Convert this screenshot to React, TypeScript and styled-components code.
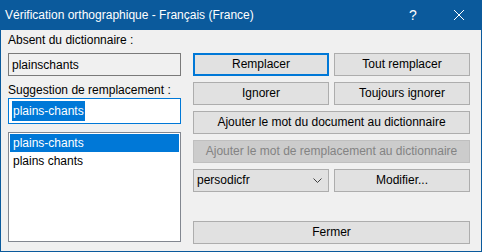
import React from 'react';
import styled, { createGlobalStyle } from 'styled-components';

const GlobalStyle = createGlobalStyle`
  html, body {
    margin: 0;
    padding: 0;
    background: #ffffff;
  }
  body {
    font-family: "Liberation Sans", "Noto Sans", sans-serif;
    font-size: 12px;
  }
`;

const Window = styled.div`
  width: 482px;
  height: 252px;
  box-sizing: border-box;
  border: 1px solid #0b5a9c;
  border-top: none;
  background: #f0f0f0;
  display: flex;
  flex-direction: column;
`;

const TitleBar = styled.div`
  height: 30px;
  margin: 0 -1px;
  background: #0b5a9c;
  color: #ffffff;
  display: flex;
  align-items: center;
  padding-left: 5px;
  font-size: 12px;
`;

const Title = styled.div`
  flex: 1;
  padding-bottom: 1px;
`;

const CaptionButton = styled.div`
  width: 46px;
  height: 30px;
  display: flex;
  align-items: center;
  justify-content: center;
  font-size: 14px;
`;

const Body = styled.div`
  flex: 1;
  display: flex;
  padding: 0 11px 7px 7px;
  gap: 12px;
`;

const LeftColumn = styled.div`
  width: 174px;
  display: flex;
  flex-direction: column;
`;

type LabelProps = { top: number; bottom: number };

const Label = styled.div<LabelProps>`
  height: 14px;
  line-height: 14px;
  color: #000000;
  margin-top: ${p => p.top}px;
  margin-bottom: ${p => p.bottom}px;
`;

type FieldProps = { focused?: boolean; readOnly?: boolean; tall?: boolean };

const Field = styled.div<FieldProps>`
  height: ${p => (p.tall ? 26 : 23)}px;
  box-sizing: border-box;
  border: 1px solid ${p => (p.focused ? '#0078d7' : '#7a7a7a')};
  background: ${p => (p.readOnly ? '#f0f0f0' : '#ffffff')};
  display: flex;
  align-items: center;
  padding-left: 3px;
  color: #000000;
`;

const Selected = styled.span`
  background: #0078d7;
  color: #ffffff;
  line-height: 20px;
  padding: 0 1px;
`;

const ListBox = styled.div`
  flex: 1;
  margin: 8px 0 2px;
  border: 1px solid #828790;
  background: #ffffff;
  padding: 1px;
  display: flex;
  flex-direction: column;
`;

const ListItem = styled.div<{ selected?: boolean }>`
  height: 18px;
  line-height: 18px;
  padding-left: 3px;
  background: ${p => (p.selected ? '#0078d7' : 'transparent')};
  color: ${p => (p.selected ? '#ffffff' : '#000000')};
`;

const RightColumn = styled.div`
  flex: 1;
  display: flex;
  flex-direction: column;
  padding-top: 23px;
`;

const ButtonGrid = styled.div`
  display: grid;
  grid-template-columns: 136px 136px;
  grid-auto-rows: 23px;
  column-gap: 5px;
  row-gap: 6px;
`;

type ButtonProps = { primary?: boolean; disabled?: boolean; wide?: boolean };

const Button = styled.div<ButtonProps>`
  box-sizing: border-box;
  grid-column: ${p => (p.wide ? '1 / 3' : 'auto')};
  border: ${p => (p.primary ? '2px solid #0078d7' : p.disabled ? '1px solid #bfbfbf' : '1px solid #adadad')};
  background: ${p => (p.disabled ? '#cccccc' : '#e1e1e1')};
  color: ${p => (p.disabled ? '#838383' : '#000000')};
  display: flex;
  align-items: center;
  justify-content: center;
  padding-bottom: 1px;
`;

const Combo = styled.div`
  box-sizing: border-box;
  border: 1px solid #adadad;
  background: #e1e1e1;
  display: flex;
  align-items: center;
  justify-content: space-between;
  padding: 0 6px 1px 3px;
  color: #000000;
`;

const Spacer = styled.div`
  flex: 1;
`;

const CloseButton = styled(Button)`
  height: 23px;
`;

function Chevron() {
  return (
    <svg width="9" height="5" viewBox="0 0 9 5">
      <path d="M0.5 0.5 L4.5 4.5 L8.5 0.5" fill="none" stroke="#404040" strokeWidth="1" />
    </svg>
  );
}

function CloseIcon() {
  return (
    <svg width="10" height="10" viewBox="0 0 10 10">
      <path d="M0 0 L10 10 M10 0 L0 10" stroke="#ffffff" strokeWidth="1" />
    </svg>
  );
}

export default function App() {
  return (
    <>
      <GlobalStyle />
      <Window>
        <TitleBar>
          <Title>Vérification orthographique - Français (France)</Title>
          <CaptionButton>?</CaptionButton>
          <CaptionButton>
            <CloseIcon />
          </CaptionButton>
        </TitleBar>
        <Body>
          <LeftColumn>
            <Label top={3} bottom={6}>Absent du dictionnaire :</Label>
            <Field readOnly>plainschants</Field>
            <Label top={7} bottom={1}>Suggestion de remplacement :</Label>
            <Field focused tall>
              <Selected>plains-chants</Selected>
            </Field>
            <ListBox>
              <ListItem selected>plains-chants</ListItem>
              <ListItem>plains chants</ListItem>
            </ListBox>
          </LeftColumn>
          <RightColumn>
            <ButtonGrid>
              <Button primary>Remplacer</Button>
              <Button>Tout remplacer</Button>
              <Button>Ignorer</Button>
              <Button>Toujours ignorer</Button>
              <Button wide>Ajouter le mot du document au dictionnaire</Button>
              <Button wide disabled>Ajouter le mot de remplacement au dictionnaire</Button>
              <Combo>
                <span>persodicfr</span>
                <Chevron />
              </Combo>
              <Button>Modifier...</Button>
            </ButtonGrid>
            <Spacer />
            <CloseButton>Fermer</CloseButton>
          </RightColumn>
        </Body>
      </Window>
    </>
  );
}
